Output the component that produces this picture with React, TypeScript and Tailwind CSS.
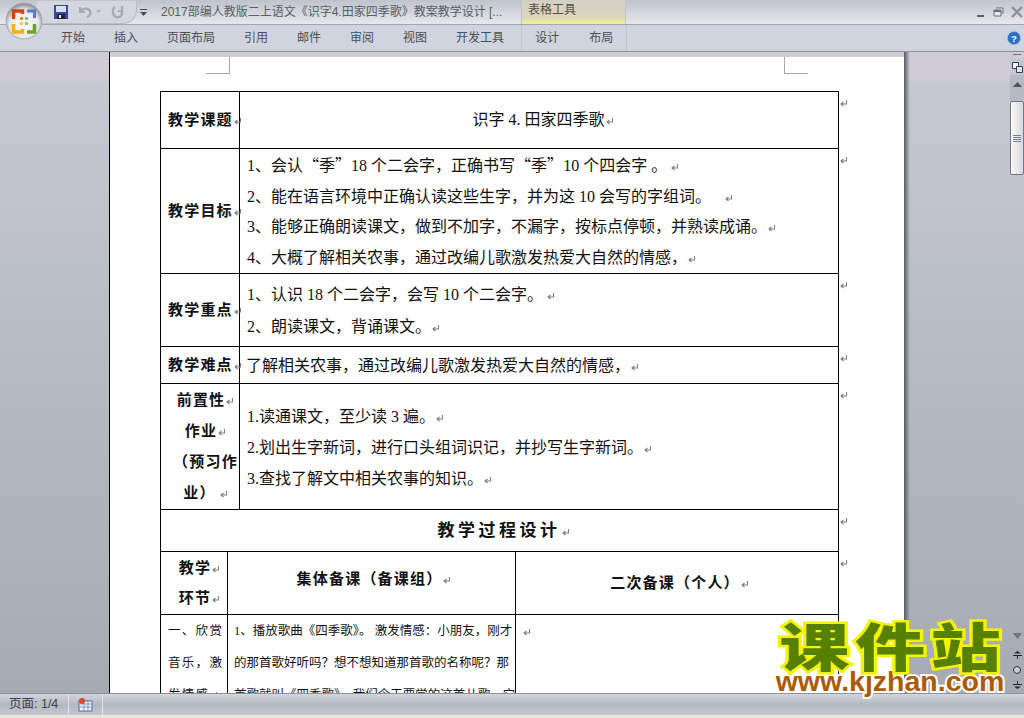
// Word 2007 window showing a lesson plan table
const SANS = "font-['Liberation_Sans','Noto_Sans_CJK_SC',sans-serif]";

const TABS = ['开始', '插入', '页面布局', '引用', '邮件', '审阅', '视图', '开发工具'];

function Mark({ className = 'ml-px' }: { className?: string }) {
  return (
    <svg width="8" height="8" viewBox="0 0 8 8" className={`inline-block align-baseline ${className}`}>
      <path d="M6.500 1v4H1.500M3.500 3L1 5l2.500 2" fill="none" stroke="#808080" strokeWidth="1.100" />
    </svg>
  );
}

// CJK quote marks, the serif Latin font would draw them narrow
function Q({ children }: { children: string }) {
  return <span className="font-['Noto_Sans_CJK_SC',sans-serif]">{children}</span>;
}

function OfficeButton() {
  return (
    <svg width="38" height="38" viewBox="0 0 38 38" className="absolute left-[5px] top-[2px]">
      <defs>
        <radialGradient id="orb" cx="50%" cy="58%" r="55%">
          <stop offset="0%" stopColor="#fdfdfb" />
          <stop offset="74%" stopColor="#e6e6e6" />
          <stop offset="100%" stopColor="#8d9097" />
        </radialGradient>
      </defs>
      <circle cx="19" cy="19" r="18" fill="url(#orb)" stroke="#a9acb3" />
      <path d="M8.500 17v-8h9v3" fill="none" stroke="#d5440f" strokeWidth="3.500" />
      <path d="M22 9h7.500v7" fill="none" stroke="#4c7fd0" strokeWidth="3" />
      <path d="M8.500 22v8h9v-3" fill="none" stroke="#f2ae1c" strokeWidth="3.500" />
      <path d="M29.500 22v8H22" fill="none" stroke="#69a630" strokeWidth="3.500" />
      <rect x="15" y="15" width="3" height="3" fill="#e88a1a" />
      <rect x="20" y="15" width="3" height="3" fill="#7fb2e0" />
      <rect x="15" y="20" width="3" height="3" fill="#f4ce5c" />
      <rect x="20" y="20" width="3" height="3" fill="#9ccb62" />
    </svg>
  );
}

function TitleBar() {
  return (
    <div className="flex h-[24px] items-center bg-gradient-to-b from-[#bfc3cb] to-[#e6e8ed] relative">
      <div className="ml-[37px] flex h-[23px] w-[100px] items-center rounded-br-[14px] border-r border-b border-[#b8bcc5] bg-[#d3d6de] pl-[17px]">
        <svg width="14" height="14" viewBox="0 0 14 14">
          <rect width="14" height="14" fill="#3c46a6" />
          <rect x="2" y="1" width="10" height="6" fill="#d9def0" />
          <rect x="3" y="9" width="8" height="5" fill="#23252c" />
          <rect x="5" y="10" width="2" height="3" fill="#e4e6ec" />
        </svg>
        <svg width="16" height="14" viewBox="0 0 16 14" className="ml-[9px]">
          <path d="M3 2v5h5M3.500 7C5 3 11 2.500 13 6c1 2 0 5-3 6" fill="none" stroke="#a6aab2" strokeWidth="2.200" />
        </svg>
        <svg width="5" height="3" viewBox="0 0 5 3" className="ml-[3px]">
          <path d="M0 0h5L2.500 3z" fill="#aeb1b8" />
        </svg>
        <svg width="13" height="14" viewBox="0 0 13 14" className="ml-[10px]">
          <path d="M4 2C1 3.500 1 10 5 12c4 1 7-2 6-6M11 1v5H7" fill="none" stroke="#a6aab2" strokeWidth="2.200" />
        </svg>
      </div>
      <svg width="7" height="7" viewBox="0 0 7 7" className="ml-[3px]">
        <path d="M0 0h7v1H0zM0 3h7L3.500 7z" fill="#4b4f57" />
      </svg>
      <span className={`ml-[14px] text-[12px] text-[#5a5e66] whitespace-nowrap ${SANS}`}>
        2017部编人教版二上语文《识字4.田家四季歌》教案教学设计 [...
      </span>
      <div className="absolute left-[521px] top-0 flex h-[24px] w-[105px] border-x border-[#c3c4c6] bg-gradient-to-b from-[#d3d0c6] via-[#dbd6bd] via-[70%] to-[#f6f08f]">
        <span className={`ml-[6px] mt-[1px] text-[12px] leading-[18px] text-[#55504a] ${SANS}`}>表格工具</span>
      </div>
      <div className="ml-auto mr-[1px] flex items-center gap-[7px]">
        <svg width="11" height="12" viewBox="0 0 11 12"><rect x="2" y="9" width="7" height="2" fill="#5e626a" /></svg>
        <svg width="11" height="12" viewBox="0 0 11 12">
          <path d="M3 2h7v5H8M1 4h7v6H1z" fill="#e6e8ec" stroke="#6a6e76" />
          <rect x="1" y="4" width="7" height="2" fill="#6a6e76" />
        </svg>
        <svg width="12" height="12" viewBox="0 0 12 12">
          <path d="M1 1l10 10M11 1L1 11" stroke="#8e9199" strokeWidth="2.400" />
        </svg>
      </div>
    </div>
  );
}

function TabRow() {
  return (
    <div className={`flex h-[27px] items-center border-t border-[#a4a7af] bg-[#cfd4de] relative text-[12px] text-[#4b4f57] ${SANS}`}>
      <div className="ml-[61px] flex gap-[29px]">
        {TABS.map(t => (
          <span key={t}>{t}</span>
        ))}
      </div>
      <div className="ml-[17px] flex h-full w-[106px] items-center gap-[30px] border-x border-[#bec4d2] pl-[13px]">
        <span>设计</span>
        <span>布局</span>
      </div>
      <svg width="14" height="14" viewBox="0 0 16 16" className="ml-auto mr-[3px]">
        <circle cx="8" cy="8" r="7.500" fill="#2b6fc4" stroke="#9db8de" />
        <text x="8" y="12" textAnchor="middle" fontSize="11" fontWeight="700" fill="#fff" fontFamily="Liberation Sans">?</text>
      </svg>
    </div>
  );
}

function Scrollbar() {
  return (
    <div className="flex w-[14px] flex-col items-center">
      <div className="mt-[2px] h-[1px] w-[8px] bg-[#6b6f77]" />
      <div className="mt-[4px] flex h-[16px] w-[14px] items-center justify-center bg-[#c3c6ce]">
        <svg width="11" height="11" viewBox="0 0 11 11">
          <path d="M.5.5h6v6h-6z" fill="#f4f5f8" stroke="#30405f" />
          <path d="M4.500 4.500h6v6h-6z" fill="#dfe4ee" stroke="#30405f" />
        </svg>
      </div>
      <div className="flex h-[26px] w-[14px] items-start justify-center bg-[#b5b9c1] pt-[7px]">
        <svg width="9" height="5" viewBox="0 0 9 5"><path d="M0 5h9L4.500 0z" fill="#4f535b" /></svg>
      </div>
      <div className="flex h-[74px] w-[14px] flex-col items-center justify-center gap-[1px] rounded-[2px] border border-[#72767e] bg-gradient-to-r from-[#fbf9f8] to-[#d5d8e0]">
        <div className="h-[1px] w-[8px] bg-[#7b7f87]" />
        <div className="h-[1px] w-[8px] bg-[#7b7f87]" />
        <div className="h-[1px] w-[8px] bg-[#7b7f87]" />
        <div className="h-[1px] w-[8px] bg-[#7b7f87]" />
      </div>
      <div className="flex-1" />
      <svg width="9" height="6" viewBox="0 0 9 6" className="mb-[11px]"><path d="M0 0h9L4.500 6z" fill="#70747c" /></svg>
      <svg width="9" height="9" viewBox="0 0 9 9" className="mb-[7px]">
        <path d="M1 3.500L4.500 1 8 3.500zM0 5h9v1H0zM4 6h1v3H4z" fill="#22252b" />
      </svg>
      <div className="mb-[7px] h-[8px] w-[8px] rounded-full border border-[#30343a] bg-[#c9ccd2]" />
      <svg width="9" height="9" viewBox="0 0 9 9" className="mb-[3px]">
        <path d="M4 0h1v3H4zM0 3h9v1H0zM1 5.500h7L4.500 8z" fill="#22252b" />
      </svg>
    </div>
  );
}

const cell = 'border border-black p-0';
const head = 'font-bold text-[15px] tracking-[1.200px] text-center text-[#111] whitespace-nowrap';
const side = 'align-top pt-[6px] leading-[8px]';

function LessonTable() {
  return (
    <table className="ml-[50px] w-[699px] table-fixed border-collapse font-['Liberation_Serif','Noto_Sans_CJK_SC',serif] text-[16px] text-[#111]">
      <colgroup>
        <col className="w-[67px]" />
        <col className="w-[12px]" />
        <col className="w-[276px]" />
        <col className="w-[323px]" />
        <col className="w-[21px]" />
      </colgroup>
      <tbody>
        <tr className="h-[57px]">
          <td colSpan={2} className={`${cell} ${head} pl-[7px]`}>教学课题<Mark /></td>
          <td colSpan={2} className={`${cell} pl-[8px] text-center`}>识字 4. 田家四季歌<Mark /></td>
          <td className={side}><Mark /></td>
        </tr>
        <tr className="h-[125px]">
          <td colSpan={2} className={`${cell} ${head} pl-[7px]`}>教学目标<Mark /></td>
          <td colSpan={2} className={`${cell} pl-[7px] leading-[30.500px] whitespace-nowrap`}>
            <p>1、会认<Q>“</Q>季<Q>”</Q>18 个二会字，正确书写<Q>“</Q>季<Q>”</Q>10 个四会字 。<Mark className="ml-1" /></p>
            <p>2、能在语言环境中正确认读这些生字，并为这 10 会写的字组词。<Mark className="ml-[14px]" /></p>
            <p>3、能够正确朗读课文，做到不加字，不漏字，按标点停顿，并熟读成诵。<Mark /></p>
            <p>4、大概了解相关农事，通过改编儿歌激发热爱大自然的情感，<Mark /></p>
          </td>
          <td className={side}><Mark /></td>
        </tr>
        <tr className="h-[73px]">
          <td colSpan={2} className={`${cell} ${head} pl-[7px]`}>教学重点<Mark /></td>
          <td colSpan={2} className={`${cell} pl-[7px] pt-[2px] leading-[32px]`}>
            <p>1、认识 18 个二会字，会写 10 个二会字。<Mark className="ml-1" /></p>
            <p>2、朗读课文，背诵课文。<Mark /></p>
          </td>
          <td className={side}><Mark /></td>
        </tr>
        <tr className="h-[37px]">
          <td colSpan={2} className={`${cell} ${head} pl-[7px]`}>教学难点<Mark /></td>
          <td colSpan={2} className={`${cell} pl-[6px] pt-[1px]`}>了解相关农事，通过改编儿歌激发热爱大自然的情感，<Mark /></td>
          <td className={side}><Mark /></td>
        </tr>
        <tr className="h-[126px]">
          <td colSpan={2} className={`${cell} ${head} pl-[11px] leading-[31px]`}>
            <p>前置性<Mark /></p>
            <p>作业<Mark /></p>
            <p>（预习作</p>
            <p>业）<Mark className="ml-1" /></p>
          </td>
          <td colSpan={2} className={`${cell} pl-[7px] pt-[1px] leading-[31px]`}>
            <p>1.读通课文，至少读 3 遍。<Mark /></p>
            <p>2.划出生字新词，进行口头组词识记，并抄写生字新词。<Mark /></p>
            <p>3.查找了解文中相关农事的知识。<Mark /></p>
          </td>
          <td className={side}><Mark /></td>
        </tr>
        <tr className="h-[42px]">
          <td colSpan={4} className={`${cell} pl-[8px] text-center text-[17px] font-bold tracking-[3.500px]`}>教学过程设计<Mark /></td>
          <td className={side}><Mark /></td>
        </tr>
        <tr className="h-[63px]">
          <td className={`${cell} ${head} pl-[11px] leading-[30px]`}>
            <p>教学<Mark /></p>
            <p>环节<Mark /></p>
          </td>
          <td colSpan={2} className={`${cell} ${head} pb-[8px] pl-[5px]`}>集体备课（备课组）<Mark /></td>
          <td className={`${cell} ${head} pl-[5px]`}>二次备课（个人）<Mark /></td>
          <td className={side}><Mark /></td>
        </tr>
        <tr className="align-top leading-[32px]">
          <td className={`${cell} pl-[7px] text-[12.500px] tracking-[1.300px] whitespace-nowrap`}>
            <p>一、欣赏</p>
            <p>音乐，激</p>
            <p>发情感<Mark /></p>
          </td>
          <td colSpan={2} className={`${cell} pl-[6px] text-[12.500px] whitespace-nowrap`}>
            <p>1、播放歌曲《四季歌》。 激发情感：小朋友，刚才</p>
            <p>的那首歌好听吗？想不想知道那首歌的名称呢？那</p>
            <p>首歌就叫《四季歌》。我们今天要学的这首儿歌，它</p>
          </td>
          <td className={`${cell} pl-[6px]`}><Mark /></td>
          <td><Mark /></td>
        </tr>
      </tbody>
    </table>
  );
}

function Watermark() {
  return (
    <div className="absolute left-[774px] top-[617px] flex w-[232px] flex-col items-center">
      <div className="scale-x-[1.35] text-[52px] leading-[56px] font-black tracking-[4px] pl-[4px] whitespace-nowrap text-[#578000] font-['Noto_Sans_CJK_SC',sans-serif] [-webkit-text-stroke:5px_#f4f400] [paint-order:stroke_fill]">
        课件站
      </div>
      <div className="-mt-[5px] text-[28.500px] leading-[26px] font-bold whitespace-nowrap text-[#ab5a06] font-['Liberation_Sans',sans-serif] [-webkit-text-stroke:4px_#ffffff] [paint-order:stroke_fill]">
        www.kjzhan.com
      </div>
    </div>
  );
}

function StatusBar() {
  return (
    <div className={`flex h-[22px] items-center border-t border-[#8f939b] bg-gradient-to-b from-[#d2d5da] via-[#b4b8c0] to-[#c4c7cd] text-[12.500px] text-[#3e4148] ${SANS}`}>
      <span className="ml-[9px] w-[59px]">页面: 1/4</span>
      <div className="h-full w-[1px] bg-[#e2e4e8]" />
      <svg width="15" height="14" viewBox="0 0 15 14" className="ml-[9px]">
        <rect x="1" y="3" width="13" height="10" fill="#f2f5fb" stroke="#4d6fa6" />
        <path d="M1 6h13M1 9h13M6 3v10M10 3v10" stroke="#7a99c8" />
        <circle cx="4" cy="3" r="3" fill="#e2452b" />
      </svg>
      <div className="ml-[9px] h-full w-[1px] bg-[#e2e4e8]" />
    </div>
  );
}

export default function App() {
  return (
    <div className="relative flex h-[718px] w-[1024px] flex-col overflow-hidden">
      <TitleBar />
      <TabRow />
      <OfficeButton />
      <div className="h-[1px] bg-[#8d9099]" />
      <div className="flex min-h-0 flex-1 bg-gradient-to-b from-[#cfccd6] from-[4%] via-[#c6c9d1] via-[5%] to-[#a6aab3]">
        <div className="w-[110px] border-r border-black" />
        <div className="mt-[5px] w-[794px] overflow-hidden bg-white">
          <div className="flex h-[34px] items-start">
            <div className="ml-[96px] h-[17px] w-[24px] border-r border-b border-[#a8a8a8]" />
            <div className="ml-[554px] h-[17px] w-[24px] border-l border-b border-[#a8a8a8]" />
          </div>
          <LessonTable />
        </div>
        <div className="w-[6px] bg-gradient-to-r from-[#555960] to-transparent" />
        <div className="flex-1" />
        <Scrollbar />
      </div>
      <StatusBar />
      <div className="h-[3px] bg-[#e7e6dd]" />
      <Watermark />
    </div>
  );
}
